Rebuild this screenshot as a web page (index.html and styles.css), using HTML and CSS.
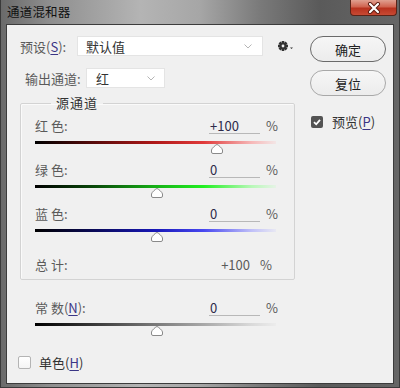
FILE: index.html
```html
<!DOCTYPE html>
<html lang="zh-CN">
<head>
<meta charset="utf-8">
<title>通道混和器</title>
<link rel="stylesheet" href="styles.css">
</head>
<body>
<div class="window">
  <div class="titlebar">
    <span class="title">通道混和器</span>
    <button class="close" aria-label="关闭">
      <svg width="16" height="12" viewBox="0 0 16 12"><path d="M4 2 L12 10 M12 2 L4 10" stroke="#5a1a10" stroke-width="4" stroke-linecap="round"/><path d="M4 2 L12 10 M12 2 L4 10" stroke="#fff" stroke-width="2.2" stroke-linecap="round"/></svg>
    </button>
  </div>
  <div class="content">
    <div class="left">
      <div class="row row-preset">
        <span class="label label-preset">预设(<u>S</u>):</span>
        <div class="select select-preset"><span>默认值</span><span class="chev"><svg width="8" height="5" viewBox="0 0 8 5"><path d="M0.5 0.5 L4 4 L7.5 0.5" fill="none" stroke="#b5b5b5" stroke-width="1"/></svg></span></div>
        <span class="gear">
          <svg width="16" height="10" viewBox="0 0 16 10">
            <g transform="translate(5 5)" fill="#333">
              <rect x="-1.3" y="-5" width="2.6" height="10"/>
              <rect x="-5" y="-1.3" width="10" height="2.6"/>
              <rect x="-1.3" y="-5" width="2.6" height="10" transform="rotate(45)"/>
              <rect x="-1.3" y="-5" width="2.6" height="10" transform="rotate(-45)"/>
              <circle r="3.6"/>
              <circle r="1.4" fill="#f0f0f0"/>
            </g>
            <path d="M12 6.5 L15 6.5 L13.5 8 Z" fill="#333"/>
          </svg>
        </span>
      </div>
      <div class="row row-output">
        <span class="label label-output">输出通道:</span>
        <div class="select select-output"><span>红</span><span class="chev"><svg width="8" height="5" viewBox="0 0 8 5"><path d="M0.5 0.5 L4 4 L7.5 0.5" fill="none" stroke="#b5b5b5" stroke-width="1"/></svg></span></div>
      </div>
      <fieldset class="group">
        <legend>源通道</legend>
        <div class="chan">
          <div class="chan-head"><span class="label">红 色:</span><span class="value">+100</span><span class="pct">%</span></div>
          <div class="track track-red"><span class="thumb" style="left:75%"><svg width="12" height="10" viewBox="0 0 12 10"><path d="M6 0.5 C7 0.5 11.5 4.5 11.5 6 L11.5 8 Q11.5 9.5 10 9.5 L2 9.5 Q0.5 9.5 0.5 8 L0.5 6 C0.5 4.5 5 0.5 6 0.5 Z" fill="#fff" stroke="#8a8a8a"/></svg></span></div>
        </div>
        <div class="chan">
          <div class="chan-head"><span class="label">绿 色:</span><span class="value">0</span><span class="pct">%</span></div>
          <div class="track track-green"><span class="thumb" style="left:50%"><svg width="12" height="10" viewBox="0 0 12 10"><path d="M6 0.5 C7 0.5 11.5 4.5 11.5 6 L11.5 8 Q11.5 9.5 10 9.5 L2 9.5 Q0.5 9.5 0.5 8 L0.5 6 C0.5 4.5 5 0.5 6 0.5 Z" fill="#fff" stroke="#8a8a8a"/></svg></span></div>
        </div>
        <div class="chan">
          <div class="chan-head"><span class="label">蓝 色:</span><span class="value">0</span><span class="pct">%</span></div>
          <div class="track track-blue"><span class="thumb" style="left:50%"><svg width="12" height="10" viewBox="0 0 12 10"><path d="M6 0.5 C7 0.5 11.5 4.5 11.5 6 L11.5 8 Q11.5 9.5 10 9.5 L2 9.5 Q0.5 9.5 0.5 8 L0.5 6 C0.5 4.5 5 0.5 6 0.5 Z" fill="#fff" stroke="#8a8a8a"/></svg></span></div>
        </div>
        <div class="total"><span class="label">总 计:</span><span class="total-val">+100</span><span class="total-pct">%</span></div>
      </fieldset>
      <div class="chan chan-const">
        <div class="chan-head"><span class="label">常 数(<u>N</u>):</span><span class="value">0</span><span class="pct">%</span></div>
        <div class="track track-const"><span class="thumb" style="left:50%"><svg width="12" height="10" viewBox="0 0 12 10"><path d="M6 0.5 C7 0.5 11.5 4.5 11.5 6 L11.5 8 Q11.5 9.5 10 9.5 L2 9.5 Q0.5 9.5 0.5 8 L0.5 6 C0.5 4.5 5 0.5 6 0.5 Z" fill="#fff" stroke="#8a8a8a"/></svg></span></div>
      </div>
      <label class="check check-mono"><span class="box"></span><span>单色(<u>H</u>)</span></label>
    </div>
    <div class="right">
      <button class="btn btn-default">确定</button>
      <button class="btn">复位</button>
      <label class="check check-preview"><span class="box checked"><svg width="10" height="10" viewBox="0 0 10 10"><path d="M2 5.2 L4.2 7.3 L8 2.8" fill="none" stroke="#fff" stroke-width="1.8"/></svg></span><span>预览(<u>P</u>)</span></label>
    </div>
  </div>
</div>
</body>
</html>
```

FILE: styles.css
```css
* { box-sizing: border-box; }
html, body { margin: 0; padding: 0; }
body {
  width: 400px;
  height: 388px;
  overflow: hidden;
  font-family: "Noto Sans CJK SC", "Noto Sans", sans-serif;
  font-size: 13px;
  color: #5a5a5a;
}
u { color: #3a3585; text-decoration: underline; text-underline-offset: 2px; }

.window {
  width: 400px;
  height: 388px;
  display: flex;
  flex-direction: column;
  background: linear-gradient(to right, #6a6a6a 0%, #8e8e8e 12%, #b4b4b4 35%, #a6a6a6 50%, #7a7a7a 65%, #5a5a5a 80%, #666 100%);
  border-left: 1px solid #3a3a3a;
  border-right: 1px solid #3a3a3a;
  border-bottom: 1px solid #3a3a3a;
}
.titlebar {
  height: 24px;
  display: flex;
  align-items: flex-start;
  justify-content: space-between;
  padding: 0 2px 0 6px;
  flex: none;
}
.title {
  font-size: 12.5px;
  color: #111;
  line-height: 24px;
  letter-spacing: 0.2px;
}
.close {
  width: 47px;
  height: 16px;
  margin: 0;
  padding: 0;
  border: 1px solid #5a2418;
  border-top: none;
  border-radius: 0 0 4px 4px;
  background: linear-gradient(#e0a090 0%, #d06450 45%, #b8321e 55%, #c84a34 100%);
  display: flex;
  align-items: center;
  justify-content: center;
}
.content {
  flex: 1;
  margin: 0 5px 3px 5px;
  background: #f0f0f0;
  border: 1px solid #3c3c3c;
  display: flex;
  align-items: flex-start;
}
.left {
  width: 275px;
  margin-left: 13px;
  padding-top: 11px;
  display: flex;
  flex-direction: column;
}
.row {
  display: flex;
  align-items: center;
  height: 20px;
}
.row-output { margin-top: 12px; }
.label { white-space: nowrap; }
.label-preset { width: 57px; }
.label-output { width: 66px; padding-left: 5px; }
.select {
  height: 20px;
  background: #fff;
  border: 1px solid #e4e4e4;
  display: flex;
  align-items: center;
  justify-content: space-between;
  color: #333;
  font-size: 13px;
}
.select-preset { width: 186px; padding: 0 10px 0 8px; }
.select-output { width: 79px; padding: 0 9px 0 9px; }
.chev { display: flex; align-items: center; }
.gear { margin-left: 15px; display: flex; }

.group {
  margin: 7px 0 0 0;
  padding: 0 16px 7px 14px;
  border: 1px solid #d3d3d3;
  border-radius: 2px;
  box-shadow: inset 1px 1px 0 #fafafa;
  min-width: 0;
}
.group legend {
  margin-left: 16px;
  padding: 0 5px;
  line-height: 16px;
  color: #333;
  letter-spacing: 1px;
}
.chan { width: 243px; }
.group .chan:first-of-type { margin-top: 7px; }
.group .chan + .chan { margin-top: 18px; }
.chan-head {
  display: flex;
  align-items: flex-end;
  height: 16px;
}
.chan-head .label { flex: 1; line-height: 16px; }
.value {
  width: 51px;
  height: 16px;
  line-height: 15px;
  border-bottom: 1px solid #b8b8b8;
  color: #2d2a4a;
  padding-left: 1px;
}
.pct { margin-left: 6px; width: 12px; line-height: 16px; }
.track {
  position: relative;
  width: 241px;
  height: 3px;
  margin-top: 7px;
}
.track-red { background: linear-gradient(to right, #000 0%, #5a0a0a 25%, #b01818 50%, #e03a3a 70%, #f6b8b8 90%, #f3e6e6 100%); }
.track-green { background: linear-gradient(to right, #000 0%, #0a4a0a 25%, #16b016 50%, #22f022 70%, #b8f8b8 90%, #e6f3e6 100%); }
.track-blue { background: linear-gradient(to right, #000 0%, #0a0a5a 25%, #1818b8 50%, #4848f0 70%, #c0c0f8 90%, #e8e8f3 100%); }
.track-const { background: linear-gradient(to right, #000 0%, #3a3a3a 25%, #7a7a7a 50%, #a8a8a8 70%, #dadada 90%, #ececec 100%); }
.thumb {
  position: absolute;
  top: 3px;
  margin-left: -5px;
  width: 12px;
  height: 10px;
  display: block;
}
.thumb svg { display: block; }
.total {
  display: flex;
  align-items: center;
  width: 243px;
  height: 16px;
  margin-top: 24px;
  padding-right: 6px;
}
.total .label { flex: 1; }
.total-pct { margin-left: 10px; }

.chan-const { margin-left: 15px; margin-top: 20px; }
.check {
  display: flex;
  align-items: center;
  white-space: nowrap;
  color: #333;
}
.check-mono { margin-top: 27px; margin-left: -2px; }
.check-mono .box { margin-right: 8px; }
.box {
  width: 13px;
  height: 13px;
  border: 1px solid #b4b4b4;
  border-radius: 2px;
  background: linear-gradient(#fff, #f4f4f4);
  display: flex;
  align-items: center;
  justify-content: center;
}
.box.checked {
  width: 12px;
  height: 12px;
  border: none;
  background: #535353;
}

.right {
  width: 76px;
  margin-left: 15px;
  padding-top: 11px;
  display: flex;
  flex-direction: column;
}
.btn {
  width: 76px;
  height: 26px;
  margin: 0;
  padding: 0;
  border: 1px solid #a8a8a8;
  border-radius: 13px;
  background: linear-gradient(#f6f6f6, #ececec);
  font-family: "Noto Sans CJK SC", "Noto Sans", sans-serif;
  font-size: 13px;
  color: #222;
}
.btn-default { border-color: #6a6a6a; }
.btn + .btn { margin-top: 8px; }
.check-preview { margin-top: 16px; margin-left: 1px; }
.check-preview .box { margin-right: 9px; }
```
